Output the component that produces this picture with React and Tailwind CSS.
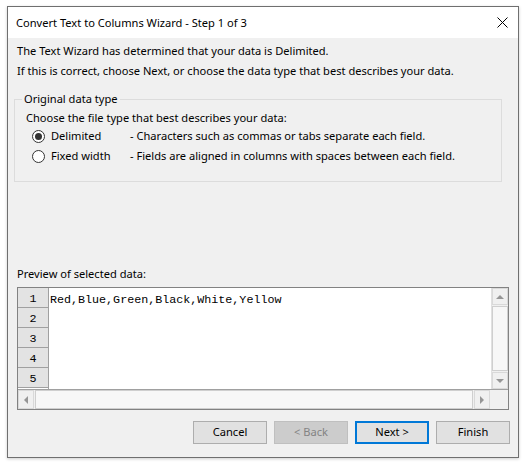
import React from "react";

const ui = { fontFamily: '"Noto Sans", "Open Sans", Arial, sans-serif' };
const mono = { fontFamily: '"Liberation Mono", "Courier New", monospace' };

function Radio({ checked }) {
  return (
    <span className="w-[13px] h-[13px] rounded-full border border-[#333333] bg-white flex items-center justify-center shrink-0">
      {checked && <span className="w-[7px] h-[7px] rounded-full bg-[#333333]" />}
    </span>
  );
}

function Btn({ children, disabled, primary }) {
  let cls = "w-[74px] h-[23px] flex items-center justify-center ";
  if (disabled) cls += "bg-[#cccccc] border border-[#bfbfbf] text-[#838383]";
  else if (primary) cls += "bg-[#e1e1e1] border-2 border-[#0078d7] text-black";
  else cls += "bg-[#e1e1e1] border border-[#adadad] text-black";
  return <div className={cls}>{children}</div>;
}

function Tri({ dir }) {
  const pts = {
    up: "0,4 4,0 8,4",
    down: "0,0 4,4 8,0",
    left: "4,0 0,4 4,8",
    right: "0,0 4,4 0,8",
  }[dir];
  const w = dir === "up" || dir === "down" ? 8 : 4;
  const h = dir === "up" || dir === "down" ? 4 : 8;
  return (
    <svg width={w} height={h} viewBox={`0 0 ${w} ${h}`}>
      <polygon points={pts} fill="#969696" />
    </svg>
  );
}

export default function App() {
  return (
    <div className="w-[529px] h-[463px] bg-white pl-[7px] pt-[6px]" style={ui}>
      <div className="w-[512px] h-[452px] border border-[#6f6f6f] flex flex-col bg-[#f0f0f0] shadow-[0_1px_3px_rgba(0,0,0,0.2)] text-[11.1px] text-black">
        <div className="h-[31px] bg-white flex items-center justify-between pl-[8px] pr-[9px] shrink-0">
          <span className="leading-[20px]">Convert Text to Columns Wizard - Step 1 of 3</span>
          <svg width="11" height="11" viewBox="0 0 11 11" className="mr-[1px]">
            <path d="M0.5 0.5 L10.5 10.5 M10.5 0.5 L0.5 10.5" stroke="#000" strokeWidth="1" />
          </svg>
        </div>
        <div className="flex-1 flex flex-col pt-[3px]">
          <div className="pl-[9px] leading-[20px]">
            <div>The Text Wizard has determined that your data is Delimited.</div>
            <div>If this is correct, choose Next, or choose the data type that best describes your data.</div>
          </div>
          <fieldset className="ml-[6px] w-[488px] border border-[#dcdcdc] mt-[8px] pb-[15px]">
            <legend className="ml-[7px] px-[2px] leading-[20px]">Original data type</legend>
            <div className="pl-[11px] leading-[17px]">Choose the file type that best describes your data:</div>
            <div className="flex items-center h-[20px] pl-[17px]">
              <Radio checked />
              <span className="ml-[6px] w-[79px]">Delimited</span>
              <span>- Characters such as commas or tabs separate each field.</span>
            </div>
            <div className="flex items-center h-[20px] pl-[17px]">
              <Radio />
              <span className="ml-[6px] w-[79px]">Fixed width</span>
              <span>- Fields are aligned in columns with spaces between each field.</span>
            </div>
          </fieldset>
          <div className="pl-[9px] leading-[20px] mt-[82px]">Preview of selected data:</div>
          <div className="ml-[9px] mt-[3px] w-[492px] h-[123px] border border-[#828282] bg-white flex flex-col">
            <div className="flex h-[101px]">
              <div className="w-[31px] border-r border-[#a0a0a0] flex flex-col shrink-0">
                {[1, 2, 3, 4, 5].map((n) => (
                  <div
                    key={n}
                    className="h-[20px] bg-[#e3e3e3] border-b border-[#a0a0a0] flex justify-center pt-[4px] leading-[14px] text-[11.7px]"
                    style={mono}
                  >
                    {n}
                  </div>
                ))}
              </div>
              <div className="flex-1 pl-[1px] pt-[5px] text-[11.7px] leading-[14px]" style={mono}>
                Red,Blue,Green,Black,White,Yellow
              </div>
              <div className="w-[17px] bg-[#f0f0f0] flex flex-col shrink-0 border-l border-[#e0e0e0]">
                <div className="h-[17px] flex items-center justify-center border border-[#d9d9d9]">
                  <Tri dir="up" />
                </div>
                <div className="flex-1 bg-[#f7f7f7] border border-[#cfcfcf] my-[1px]" />
                <div className="h-[17px] flex items-center justify-center border border-[#d9d9d9]">
                  <Tri dir="down" />
                </div>
              </div>
            </div>
            <div className="flex flex-1 bg-[#f0f0f0] border-t border-[#a0a0a0]">
              <div className="w-[16px] flex items-center justify-center border border-[#d9d9d9]">
                <Tri dir="left" />
              </div>
              <div className="flex-1 bg-[#f7f7f7] border border-[#cfcfcf] mx-[1px]" />
              <div className="w-[16px] flex items-center justify-center border border-[#d9d9d9]">
                <Tri dir="right" />
              </div>
              <div className="w-[18px] bg-[#f0f0f0]" />
            </div>
          </div>
          <div className="flex justify-end gap-[7px] mt-[11px] pr-[8px]">
            <Btn>Cancel</Btn>
            <Btn disabled>&lt; Back</Btn>
            <Btn primary>Next &gt;</Btn>
            <Btn>Finish</Btn>
          </div>
        </div>
      </div>
    </div>
  );
}
